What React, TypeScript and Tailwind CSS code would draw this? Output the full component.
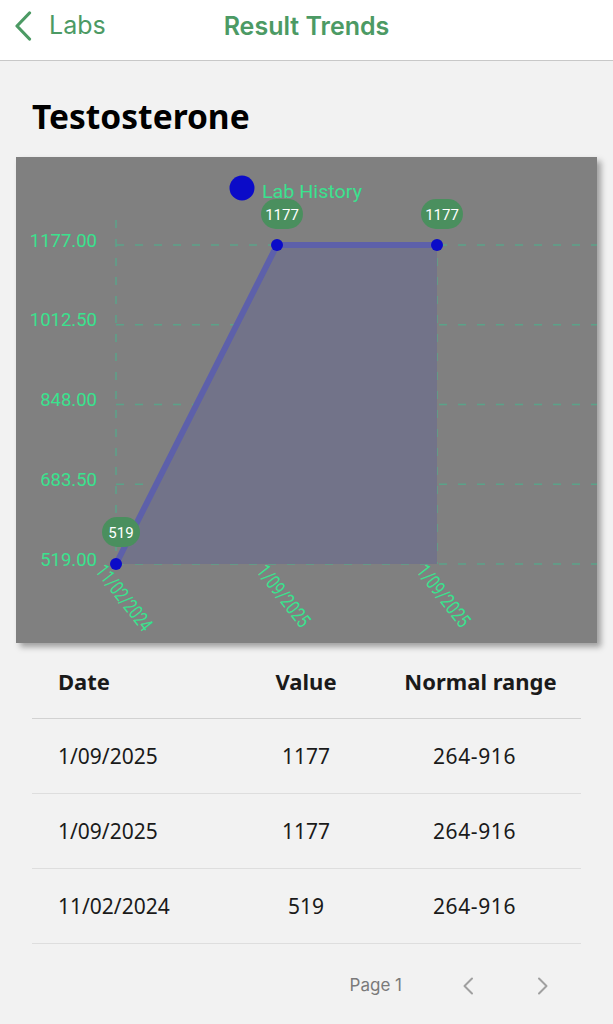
import React from "react";

const GREEN = "#4c9a64";
const AXIS = "#3ae28e";

const rows = [
  { date: "1/09/2025", value: "1177", range: "264-916" },
  { date: "1/09/2025", value: "1177", range: "264-916" },
  { date: "11/02/2024", value: "519", range: "264-916" },
];

// chart geometry, in card coordinates (card is 581x486)
const gridY = [88, 167.75, 247.5, 327.25, 407];
const yLabels = ["1177.00", "1012.50", "848.00", "683.50", "519.00"];
const gridX = [100, 261, 421];
const points = [
  { x: 100, y: 407, v: "519", date: "11/02/2024", len: 78 },
  { x: 261, y: 88, v: "1177", date: "1/09/2025", len: 73 },
  { x: 421, y: 88, v: "1177", date: "1/09/2025", len: 73 },
];

function Pill({ cx, cy, label, w }: { cx: number; cy: number; label: string; w: number }) {
  return (
    <g>
      <rect x={cx - w / 2} y={cy - 15} width={w} height={30} rx={15} fill="#4a8f5e" />
      <text
        x={cx}
        y={cy + 5.5}
        textAnchor="middle"
        fontSize={15}
        fill="#ffffff"
        fontFamily="Roboto, sans-serif"
      >
        {label}
      </text>
    </g>
  );
}

function TrendChart() {
  const line = points.map((p) => `${p.x},${p.y}`).join(" ");
  const area = `${line} 421,407 100,407`;
  return (
    <svg viewBox="0 0 581 486" width={581} height={486} className="block">
      {gridY.map((y) => (
        <line
          key={y}
          x1={100}
          x2={581}
          y1={y}
          y2={y}
          stroke="#4fae8c"
          strokeOpacity={0.75}
          strokeWidth={1.5}
          strokeDasharray="8 11"
        />
      ))}
      {gridX.map((x) => (
        <line
          key={x}
          x1={x}
          x2={x}
          y1={63}
          y2={407}
          stroke="#4fae8c"
          strokeOpacity={0.75}
          strokeWidth={1.5}
          strokeDasharray="8 11"
        />
      ))}
      <polygon points={area} fill="#727389" />
      <polyline
        points={line}
        fill="none"
        stroke="#5d60aa"
        strokeWidth={6}
        strokeLinejoin="round"
      />
      {points.map((p, i) => (
        <circle key={i} cx={p.x} cy={p.y} r={6} fill="#0b0bc8" />
      ))}

      {yLabels.map((l, i) => (
        <text
          key={l}
          x={81}
          y={gridY[i] + 1.5}
          textAnchor="end"
          fontSize={18.5}
          fill={AXIS}
          fontFamily="Roboto, sans-serif"
        >
          {l}
        </text>
      ))}

      {points.map((p, i) => (
        <text
          key={i}
          x={0}
          y={0}
          transform={`translate(${p.x - 17} 411) rotate(52)`}
          dominantBaseline="middle"
          fontSize={20}
          textLength={p.len}
          lengthAdjust="spacingAndGlyphs"
          fill={AXIS}
          fontFamily="Roboto, sans-serif"
        >
          {p.date}
        </text>
      ))}

      <circle cx={226} cy={31} r={12.5} fill="#0b0bc8" />
      <text
        x={246}
        y={41}
        fontSize={18.5}
        textLength={100}
        lengthAdjust="spacingAndGlyphs"
        fill={AXIS}
        fontFamily="Roboto, sans-serif"
      >
        Lab History
      </text>

      <Pill cx={266} cy={57} label="1177" w={42} />
      <Pill cx={426} cy={57} label="1177" w={42} />
      <Pill cx={105} cy={375} label="519" w={38} />
    </svg>
  );
}

function Chevron({ dir, className }: { dir: "left" | "right"; className?: string }) {
  return (
    <svg width="12" height="18" viewBox="0 0 12 18" className={className}>
      <path
        d={dir === "left" ? "M10 1.5 L2.5 9 L10 16.5" : "M2 1.5 L9.5 9 L2 16.5"}
        fill="none"
        stroke="currentColor"
        strokeWidth={2}
        strokeLinecap="round"
        strokeLinejoin="round"
      />
    </svg>
  );
}

export default function App() {
  return (
    <div className="w-[613px] h-[1024px] bg-[#f2f2f2] overflow-hidden" style={{ fontFamily: "'Noto Sans', sans-serif" }}>
      <header
        className="relative h-[61px] bg-white border-b border-[#c8c8c8] flex items-center justify-center pb-[8px]"
        style={{ fontFamily: "Inter, sans-serif" }}
      >
        <button className="absolute left-[14px] top-[11px] flex items-center gap-[17px]" style={{ color: GREEN }}>
          <svg width="18" height="30" viewBox="0 0 18 30">
            <path
              d="M15.5 2 L3 15 L15.5 28"
              fill="none"
              stroke="currentColor"
              strokeWidth={3.2}
              strokeLinecap="round"
              strokeLinejoin="round"
            />
          </svg>
          <span className="text-[25px] leading-none -mt-[1px]">Labs</span>
        </button>
        <h1 className="text-[25px] font-semibold leading-none" style={{ color: GREEN }}>
          Result Trends
        </h1>
      </header>

      <h2 className="mt-[39px] ml-[32px] text-[33.5px] leading-none font-bold text-black">Testosterone</h2>

      <div className="mt-[23px] ml-[16px] w-[581px] h-[486px] bg-[#808080] shadow-[4px_4px_6px_rgba(0,0,0,0.35)]">
        <TrendChart />
      </div>

      <div className="mx-[32px] text-[#1a1a1a]">
        <div className="grid grid-cols-[200px_148px_201px] h-[76px] items-center border-b border-[#d2d2d2] text-[22px] font-bold pt-[2px]">
          <div className="pl-[26px]">Date</div>
          <div className="text-center">Value</div>
          <div className="text-center">Normal range</div>
        </div>
        {rows.map((r, i) => (
          <div
            key={i}
            className="grid grid-cols-[200px_148px_201px] h-[75px] items-center border-b border-[#dedede] text-[21px] pt-[2px]"
          >
            <div className="pl-[26px]">{r.date}</div>
            <div className="text-center">{r.value}</div>
            <div className="text-center pr-[12px] tracking-[0.6px]">{r.range}</div>
          </div>
        ))}
        <div className="flex items-center justify-end h-[76px] pr-[24px] pt-[8px]">
          <span className="text-[17px] text-[#7a7a7a]" style={{ fontFamily: "Inter, sans-serif" }}>
            Page 1
          </span>
          <button className="ml-[52px] w-[28px] flex justify-center text-[#a0a0a0]">
            <Chevron dir="left" />
          </button>
          <button className="ml-[47px] w-[28px] flex justify-center text-[#a0a0a0]">
            <Chevron dir="right" />
          </button>
        </div>
      </div>
    </div>
  );
}
